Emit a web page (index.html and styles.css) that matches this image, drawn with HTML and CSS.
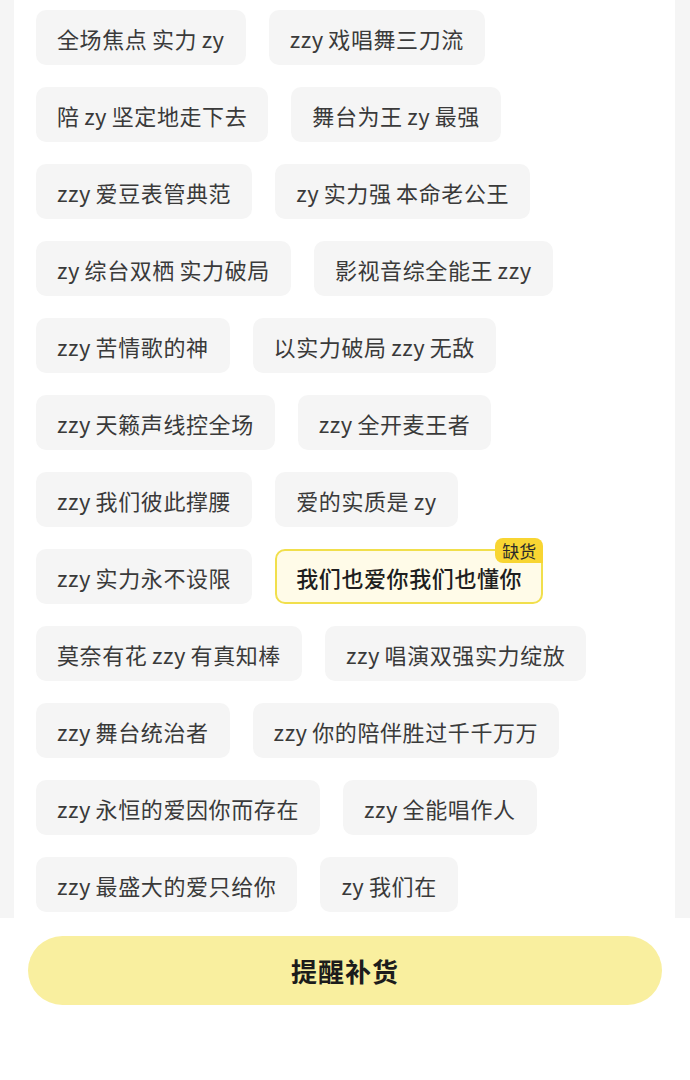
FILE: index.html
```html
<!DOCTYPE html>
<html lang="zh">
<head>
<meta charset="utf-8">
<link rel="stylesheet" href="styles.css">
</head>
<body>
<div class="frame">
  <div class="panel">
    <div class="chips">
      <span class="chip">全场焦点 实力 zy</span>
      <span class="chip">zzy 戏唱舞三刀流</span>
      <span class="chip">陪 zy 坚定地走下去</span>
      <span class="chip">舞台为王 zy 最强</span>
      <span class="chip">zzy 爱豆表管典范</span>
      <span class="chip">zy 实力强 本命老公王</span>
      <span class="chip">zy 综台双栖 实力破局</span>
      <span class="chip">影视音综全能王 zzy</span>
      <span class="chip">zzy 苦情歌的神</span>
      <span class="chip">以实力破局 zzy 无敌</span>
      <span class="chip">zzy 天籁声线控全场</span>
      <span class="chip">zzy 全开麦王者</span>
      <span class="chip">zzy 我们彼此撑腰</span>
      <span class="chip">爱的实质是 zy</span>
      <span class="chip">zzy 实力永不设限</span>
      <span class="chip chip-active">我们也爱你我们也懂你<span class="badge">缺货</span></span>
      <span class="chip">莫奈有花 zzy 有真知棒</span>
      <span class="chip">zzy 唱演双强实力绽放</span>
      <span class="chip">zzy 舞台统治者</span>
      <span class="chip">zzy 你的陪伴胜过千千万万</span>
      <span class="chip">zzy 永恒的爱因你而存在</span>
      <span class="chip">zzy 全能唱作人</span>
      <span class="chip">zzy 最盛大的爱只给你</span>
      <span class="chip">zy 我们在</span>
    </div>
  </div>
</div>
<div class="footer">
  <button class="remind">提醒补货</button>
</div>
</body>
</html>
```
FILE: styles.css
```css
* { box-sizing: border-box; }
html, body {
  margin: 0;
  padding: 0;
  background: #ffffff;
  font-family: "Noto Sans CJK SC", "Noto Sans", sans-serif;
}
.frame {
  background: #f5f5f5;
  padding: 0 15px 0 14px;
}
.panel {
  background: #ffffff;
  padding: 10px 8px 6px 22px;
}
.chips {
  display: flex;
  flex-wrap: wrap;
  column-gap: 23px;
  row-gap: 22px;
}
.chip {
  position: relative;
  display: inline-flex;
  align-items: center;
  height: 55px;
  padding: 0 21px;
  background: #f5f5f5;
  border-radius: 10px;
  color: #3a3a3a;
  font-size: 22px;
  letter-spacing: 0.6px;
  word-spacing: -1px;
  white-space: nowrap;
}
.chip-active {
  background: #fffbe8;
  border: 2px solid #f1df4c;
  padding: 0 19px;
  color: #1e1e1e;
  font-weight: 500;
}
.badge {
  position: absolute;
  top: -13px;
  right: -2px;
  height: 25px;
  padding: 0 7px;
  background: #f8d532;
  border-radius: 8px 8px 0 8px;
  color: #2a2a2a;
  font-size: 17px;
  font-weight: 400;
  line-height: 25px;
  letter-spacing: 0;
  word-spacing: 0;
}
.footer {
  padding: 18px 28px 0 28px;
}
.remind {
  display: block;
  width: 634px;
  height: 69px;
  border: none;
  border-radius: 35px;
  background: #f9ef9f;
  color: #1c1c1c;
  font-family: "Noto Sans CJK SC", "Noto Sans", sans-serif;
  font-size: 26px;
  font-weight: 700;
  letter-spacing: 1px;
}
```
